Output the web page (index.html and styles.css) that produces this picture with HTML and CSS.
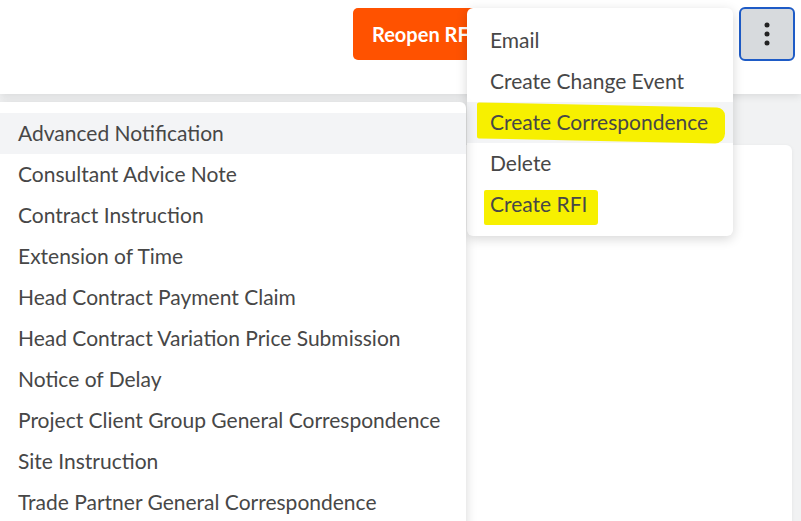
FILE: index.html
```html
<!DOCTYPE html>
<html>
<head>
<meta charset="utf-8">
<link rel="stylesheet" href="styles.css">
</head>
<body>
<div class="page">
  <header class="header">
    <button class="btn-reopen">Reopen RFI</button>
    <button class="btn-kebab" aria-label="More">
      <svg width="6" height="26" viewBox="0 0 6 26"><circle cx="3" cy="4" r="2.5" fill="#222"/><circle cx="3" cy="13" r="2.5" fill="#222"/><circle cx="3" cy="22" r="2.5" fill="#222"/></svg>
    </button>
  </header>
  <main class="content">
    <section class="card"></section>
  </main>

  <ul class="menu menu-actions">
    <li class="item">Email</li>
    <li class="item">Create Change Event</li>
    <li class="item hover"><span class="hl hl-corr"></span><span class="label">Create Correspondence</span></li>
    <li class="item">Delete</li>
    <li class="item"><span class="hl hl-rfi"></span><span class="label">Create RFI</span></li>
  </ul>

  <ul class="menu menu-types">
    <li class="item hover">Advanced Notification</li>
    <li class="item">Consultant Advice Note</li>
    <li class="item">Contract Instruction</li>
    <li class="item">Extension of Time</li>
    <li class="item">Head Contract Payment Claim</li>
    <li class="item">Head Contract Variation Price Submission</li>
    <li class="item">Notice of Delay</li>
    <li class="item">Project Client Group General Correspondence</li>
    <li class="item">Site Instruction</li>
    <li class="item">Trade Partner General Correspondence</li>
  </ul>
</div>
</body>
</html>
```

FILE: styles.css
```css
* { box-sizing: border-box; }
html, body { margin: 0; padding: 0; }
body {
  width: 801px;
  height: 521px;
  overflow: hidden;
  font-family: Lato, "Liberation Sans", sans-serif;
  background: #f1f2f3;
}
.page {
  position: relative;
  width: 801px;
  height: 521px;
  overflow: hidden;
}
.header {
  height: 94px;
  background: #ffffff;
  display: flex;
  justify-content: flex-end;
  align-items: flex-start;
  padding: 7px 6px 0 0;
  gap: 6px;
  box-shadow: 0 2px 8px rgba(0,0,0,0.10);
  position: relative;
  z-index: 1;
}
.btn-reopen {
  margin-top: 1px;
  width: 200px;
  height: 52px;
  background: #ff5200;
  color: #ffffff;
  border: none;
  border-radius: 5px;
  font-family: Lato, "Liberation Sans", sans-serif;
  font-weight: 700;
  font-size: 20px;
  text-align: left;
  padding: 0 0 0 19px;
  margin-right: 180px;
}
.btn-kebab {
  width: 56px;
  height: 54px;
  background: #d7dadd;
  border: 2px solid #1e5bc6;
  border-radius: 6px;
  display: flex;
  align-items: center;
  justify-content: center;
  padding: 0;
}
.content {
  display: flex;
  justify-content: flex-end;
  padding: 51px 9px 0 0;
}
.card {
  width: 360px;
  height: 420px;
  background: #ffffff;
  border-radius: 6px;
  box-shadow: 0 1px 4px rgba(0,0,0,0.06);
}
.menu {
  list-style: none;
  margin: 0;
  position: absolute;
  background: #ffffff;
  z-index: 5;
}
.menu .item {
  position: relative;
  height: 41px;
  display: flex;
  align-items: center;
  font-size: 21px;
  line-height: 24px;
  padding-bottom: 2px;
  color: #474747;
  white-space: nowrap;
}
.menu .item.hover { background: #f3f4f6; }
.menu-actions {
  left: 467px;
  top: 8px;
  width: 266px;
  padding: 12px 0 11px;
  border-radius: 6px;
  box-shadow: 0 3px 12px rgba(0,0,0,0.16);
}
.menu-actions .item { padding-left: 23px; }
.menu-types {
  left: 0;
  top: 102px;
  width: 466px;
  height: 460px;
  padding: 11px 0 0;
  border-radius: 0 6px 0 0;
  box-shadow: 0 3px 12px rgba(0,0,0,0.16);
}
.menu-types .item { padding-left: 18px; }
.label { position: relative; }
.hl {
  position: absolute;
  background: #f7f000;
  border-radius: 3px;
}
.hl-corr {
  left: 10px;
  top: 3px;
  width: 248px;
  height: 36px;
  transform: skewY(1.2deg);
  border-radius: 2px 8px 10px 2px;
}
.hl-rfi {
  left: 17px;
  top: 6px;
  width: 114px;
  height: 35px;
  border-radius: 2px 3px 3px 2px;
}
```
